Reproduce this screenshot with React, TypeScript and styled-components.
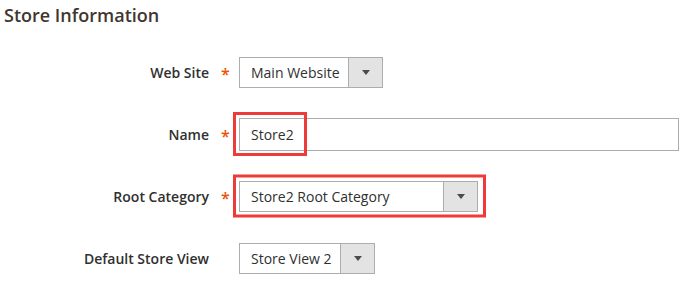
import styled, { createGlobalStyle } from 'styled-components'

const GlobalStyle = createGlobalStyle`
  body {
    margin: 0;
    background: #fff;
    font-family: 'Open Sans', 'Liberation Sans', sans-serif;
    color: #303030;
  }
`

type Field = {
  label: string
  required?: boolean
  kind: 'select' | 'input'
  value: string
  width?: number
  highlight?: { w: number; h: number; right: number; bottom: number }
}

const fields: Field[] = [
  { label: 'Web Site', required: true, kind: 'select', value: 'Main Website', width: 144 },
  { label: 'Name', required: true, kind: 'input', value: 'Store2', highlight: { w: 74, h: 44, right: 0, bottom: 0 } },
  { label: 'Root Category', required: true, kind: 'select', value: 'Store2 Root Category', width: 239, highlight: { w: 253, h: 43, right: 0, bottom: 0 } },
  { label: 'Default Store View', kind: 'select', value: 'Store View 2', width: 136 },
]

export default function App() {
  return (
    <Page>
      <GlobalStyle />
      <Title>Store Information</Title>
      <Form>
        {fields.map((f) => (
          <Row key={f.label}>
            <Label>{f.label}</Label>
            <Required>{f.required ? '*' : ''}</Required>
            <Control>
              {f.kind === 'select' ? (
                <Select $width={f.width ?? 140}>
                  <SelectValue>{f.value}</SelectValue>
                  <SelectButton>
                    <Arrow />
                  </SelectButton>
                </Select>
              ) : (
                <TextInput>{f.value}</TextInput>
              )}
              {f.highlight && <Highlight $w={f.highlight.w} $h={f.highlight.h} />}
            </Control>
          </Row>
        ))}
      </Form>
    </Page>
  )
}

const Page = styled.div`
  width: 689px;
  height: 283px;
  overflow: hidden;
  padding: 0 10px 0 4px;
  box-sizing: border-box;
`

const Title = styled.h2`
  margin: 0;
  height: 41px;
  padding-top: 2px;
  box-sizing: border-box;
  font-size: 18px;
  font-weight: 600;
  line-height: 26px;
  color: #41362f;
`

const Form = styled.div`
  display: flex;
  flex-direction: column;
`

const Row = styled.div`
  display: grid;
  grid-template-columns: 205px 30px 1fr;
  align-items: center;
  height: 62px;
`

const Label = styled.div`
  text-align: right;
  font-size: 14px;
  font-weight: 600;
  color: #303030;
`

const Required = styled.div`
  padding-left: 12px;
  font-size: 16px;
  font-weight: 600;
  color: #eb5202;
  line-height: 1;
  padding-top: 3px;
`

const Control = styled.div`
  position: relative;
  display: flex;
`

const Select = styled.div<{ $width: number }>`
  display: flex;
  width: ${(p) => p.$width}px;
  height: 31px;
  box-sizing: border-box;
  border: 1px solid #adadad;
  background: #fff;
`

const SelectValue = styled.div`
  flex: 1;
  padding-left: 11px;
  font-size: 14px;
  line-height: 29px;
  color: #303030;
  white-space: nowrap;
`

const SelectButton = styled.div`
  width: 33px;
  border-left: 1px solid #adadad;
  background: #e3e3e3;
  display: flex;
  align-items: center;
  justify-content: center;
`

const Arrow = styled.span`
  width: 0;
  height: 0;
  border-left: 4px solid transparent;
  border-right: 4px solid transparent;
  border-top: 5px solid #514943;
  margin-top: 1px;
`

const TextInput = styled.div`
  flex: 1;
  height: 33px;
  box-sizing: border-box;
  border: 1px solid #adadad;
  padding-left: 11px;
  font-size: 14px;
  line-height: 31px;
  color: #303030;
`

const Highlight = styled.div<{ $w: number; $h: number }>`
  position: absolute;
  left: -6px;
  top: 50%;
  width: ${(p) => p.$w}px;
  height: ${(p) => p.$h}px;
  transform: translateY(-50%);
  box-sizing: border-box;
  border: 3px solid #ef3a3a;
  pointer-events: none;
`
